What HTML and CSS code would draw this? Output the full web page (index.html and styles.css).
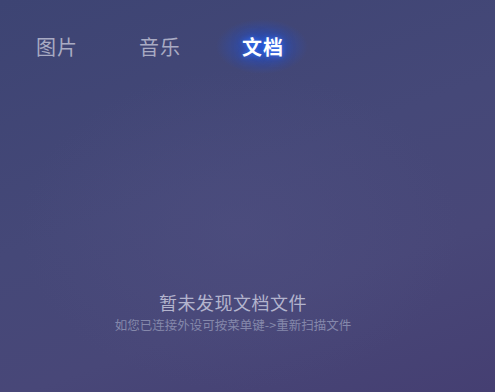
FILE: index.html
```html
<!DOCTYPE html>
<html lang="zh">
<head>
<meta charset="utf-8">
<link rel="stylesheet" href="styles.css">
</head>
<body>
<div class="screen">
  <nav class="tabs">
    <span class="tab">图片</span>
    <span class="tab">音乐</span>
    <span class="tab active">文档</span>
  </nav>
  <div class="empty">
    <div class="title">暂未发现文档文件</div>
    <div class="hint">如您已连接外设可按菜单键-&gt;重新扫描文件</div>
  </div>
</div>
</body>
</html>
```
FILE: styles.css
```css
html, body {
  margin: 0;
  padding: 0;
  width: 495px;
  height: 392px;
  overflow: hidden;
}
.screen {
  width: 495px;
  height: 392px;
  box-sizing: border-box;
  background:
    radial-gradient(ellipse 220px 160px at 240px 230px, rgba(80, 80, 130, 0.5), rgba(80, 80, 130, 0) 100%),
    linear-gradient(160deg, #3d4473 0%, #454878 45%, #484778 70%, #453f72 100%);
  font-family: "Noto Sans CJK SC", "Noto Sans", sans-serif;
  display: flex;
  flex-direction: column;
}
.tabs {
  display: flex;
  padding: 33px 0 0 36px;
  gap: 61px;
  height: 60px;
  box-sizing: border-box;
}
.tab {
  font-size: 20px;
  line-height: 28px;
  color: #a9abc3;
  letter-spacing: 1px;
  position: relative;
}
.tab.active {
  color: #ffffff;
  font-weight: bold;
  z-index: 1;
  text-shadow: 0 0 5px rgba(60, 120, 255, 0.9), 0 0 12px rgba(40, 90, 230, 0.7);
}
.tab.active::before {
  content: "";
  position: absolute;
  left: -26px;
  right: -24px;
  top: -14px;
  bottom: -14px;
  background: radial-gradient(ellipse closest-side, rgba(30, 80, 210, 0.8), rgba(40, 78, 190, 0.45) 55%, rgba(60, 70, 140, 0) 100%);
  z-index: -1;
}
.empty {
  margin-top: 231px;
  padding-right: 29px;
  display: flex;
  flex-direction: column;
  align-items: center;
}
.title {
  font-size: 18px;
  line-height: 22px;
  color: #b3b4cd;
  letter-spacing: 0.5px;
}
.hint {
  margin-top: 4px;
  font-size: 12.5px;
  line-height: 16px;
  color: #8588ab;
}
```
